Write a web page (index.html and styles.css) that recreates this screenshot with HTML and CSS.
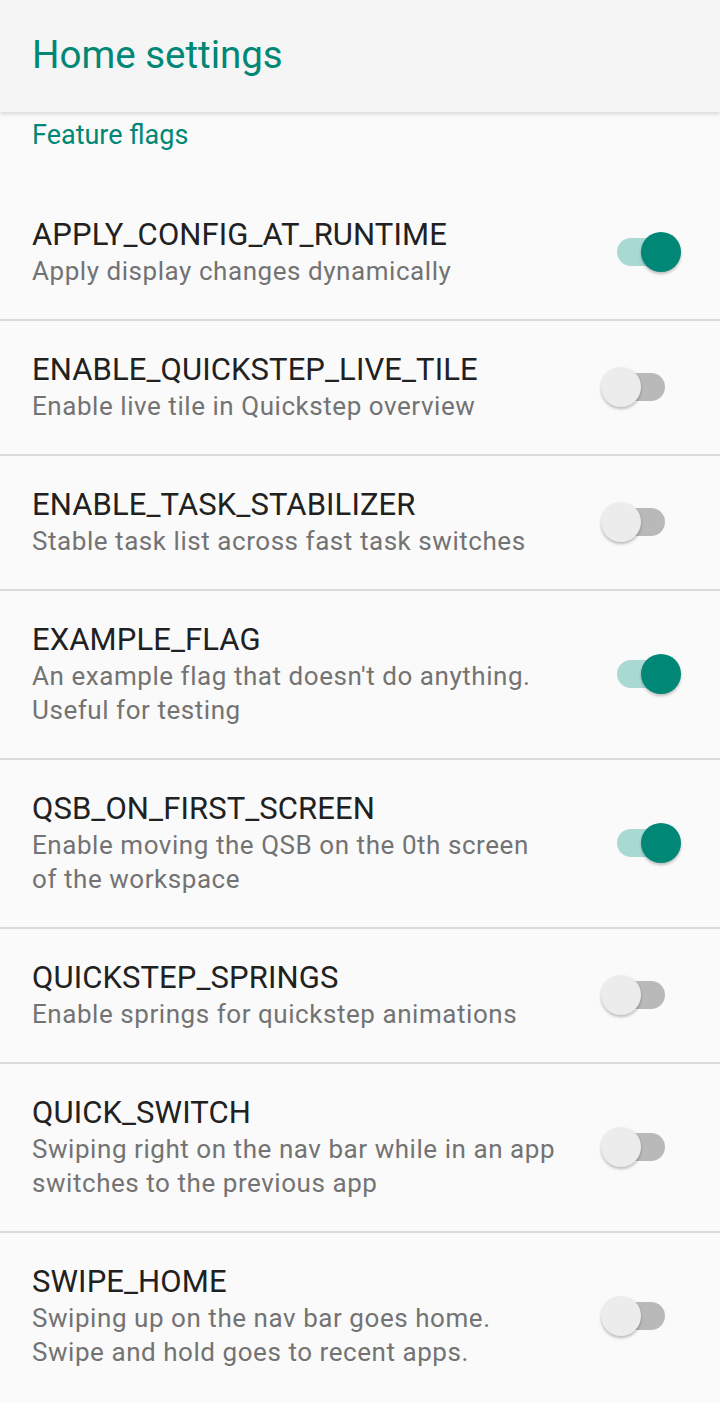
FILE: index.html
```html
<!DOCTYPE html>
<html lang="en">
<head>
    <meta charset="UTF-8">
    <meta name="viewport" content="width=device-width, initial-scale=1.0">
    <title>Home settings</title>
    <link rel="stylesheet" href="styles.css">
</head>
<body>
    <header class="app-bar">
        <h1>Home settings</h1>
    </header>

    <main class="prefs">
        <div class="category">Feature flags</div>

        <div class="pref">
            <div class="pref-text">
                <div class="pref-title">APPLY_CONFIG_AT_RUNTIME</div>
                <div class="pref-summary">Apply display changes dynamically</div>
            </div>
            <div class="switch on"><span class="track"></span><span class="thumb"></span></div>
        </div>

        <div class="pref">
            <div class="pref-text">
                <div class="pref-title">ENABLE_QUICKSTEP_LIVE_TILE</div>
                <div class="pref-summary">Enable live tile in Quickstep overview</div>
            </div>
            <div class="switch"><span class="track"></span><span class="thumb"></span></div>
        </div>

        <div class="pref">
            <div class="pref-text">
                <div class="pref-title">ENABLE_TASK_STABILIZER</div>
                <div class="pref-summary">Stable task list across fast task switches</div>
            </div>
            <div class="switch"><span class="track"></span><span class="thumb"></span></div>
        </div>

        <div class="pref">
            <div class="pref-text">
                <div class="pref-title">EXAMPLE_FLAG</div>
                <div class="pref-summary">An example flag that doesn't do anything. Useful for testing</div>
            </div>
            <div class="switch on"><span class="track"></span><span class="thumb"></span></div>
        </div>

        <div class="pref">
            <div class="pref-text">
                <div class="pref-title">QSB_ON_FIRST_SCREEN</div>
                <div class="pref-summary">Enable moving the QSB on the 0th screen of the workspace</div>
            </div>
            <div class="switch on"><span class="track"></span><span class="thumb"></span></div>
        </div>

        <div class="pref">
            <div class="pref-text">
                <div class="pref-title">QUICKSTEP_SPRINGS</div>
                <div class="pref-summary">Enable springs for quickstep animations</div>
            </div>
            <div class="switch"><span class="track"></span><span class="thumb"></span></div>
        </div>

        <div class="pref">
            <div class="pref-text">
                <div class="pref-title">QUICK_SWITCH</div>
                <div class="pref-summary">Swiping right on the nav bar while in an app switches to the previous app</div>
            </div>
            <div class="switch"><span class="track"></span><span class="thumb"></span></div>
        </div>

        <div class="pref">
            <div class="pref-text">
                <div class="pref-title">SWIPE_HOME</div>
                <div class="pref-summary">Swiping up on the nav bar goes home. Swipe and hold goes to recent apps.</div>
            </div>
            <div class="switch"><span class="track"></span><span class="thumb"></span></div>
        </div>
    </main>
</body>
</html>
```

FILE: styles.css
```css
:root {
    --accent: #008776;
    --title: #212121;
    --summary: #737373;
    --divider: #dadada;
}

body {
    margin: 0;
    background: #fafafa;
    font-family: Roboto, 'Noto Sans', sans-serif;
    overflow: hidden;
}

.app-bar {
    position: relative;
    z-index: 1;
    height: 112px;
    box-sizing: border-box;
    padding: 31px 32px 0;
    background: #f5f5f5;
    box-shadow: 0 2px 4px rgba(0, 0, 0, 0.14);
}

.app-bar h1 {
    margin: 0;
    font-size: 38.5px;
    line-height: 48px;
    font-weight: 400;
    color: var(--accent);
}

.category {
    padding: 7px 32px 35px;
    font-size: 27px;
    line-height: 32px;
    color: var(--accent);
}

.pref {
    display: flex;
    align-items: center;
    padding: 30px 39px 31px 32px;
    border-bottom: 2px solid var(--divider);
}

.pref:last-child {
    border-bottom: none;
}

.pref-text {
    flex: 1;
    max-width: 528px;
}

.pref-title {
    font-size: 31px;
    line-height: 38px;
    letter-spacing: 0.1px;
    color: var(--title);
}

.pref-summary {
    font-size: 26px;
    line-height: 34px;
    letter-spacing: 0.55px;
    color: var(--summary);
}

/* switch: 48x28 track, 40px thumb */
.switch {
    position: relative;
    width: 80px;
    height: 40px;
    margin-left: auto;
    flex-shrink: 0;
}

.track {
    position: absolute;
    left: 16px;
    top: 6px;
    width: 48px;
    height: 28px;
    border-radius: 14px;
    background: #b9b9b9;
}

.thumb {
    position: absolute;
    left: 0;
    top: 0;
    width: 40px;
    height: 40px;
    border-radius: 50%;
    background: #ececec;
    box-shadow: 0 2px 3px rgba(0, 0, 0, 0.25);
}

.switch.on .track {
    background: #a9d9d3;
}

.switch.on .thumb {
    left: 40px;
    background: var(--accent);
}
```
